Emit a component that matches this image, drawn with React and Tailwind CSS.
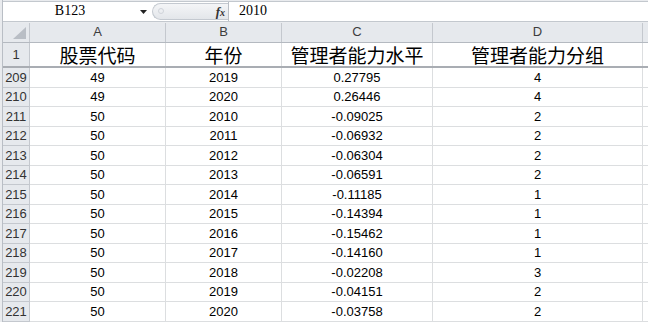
import React from "react";

const rows = [
	["209", "49", "2019", "0.27795", "4"],
	["210", "49", "2020", "0.26446", "4"],
	["211", "50", "2010", "-0.09025", "2"],
	["212", "50", "2011", "-0.06932", "2"],
	["213", "50", "2012", "-0.06304", "2"],
	["214", "50", "2013", "-0.06591", "2"],
	["215", "50", "2014", "-0.11185", "1"],
	["216", "50", "2015", "-0.14394", "1"],
	["217", "50", "2016", "-0.15462", "1"],
	["218", "50", "2017", "-0.14160", "1"],
	["219", "50", "2018", "-0.02208", "3"],
	["220", "50", "2019", "-0.04151", "2"],
	["221", "50", "2020", "-0.03758", "2"],
];

const sans = "font-['Liberation_Sans',Arial,sans-serif]";
const cjk = "font-['Noto_Sans_CJK_SC','Noto_Sans_CJK_JP',sans-serif]";

function FormulaBar() {
	return (
		<div className="flex h-[20px] border-b border-[#c3c8ce] bg-white">
			{/* name box */}
			<div className="relative flex w-[149px] items-center">
				<span className="w-[134px] text-center font-['Liberation_Serif',serif] text-[14px] leading-none text-black">
					B123
				</span>
				<svg className="absolute left-[137px] top-[8px]" width="8" height="5" viewBox="0 0 8 5">
					<polygon points="0,0 7,0 3.5,4" fill="#222" />
				</svg>
			</div>
			{/* fx pill */}
			<div className="my-[1px] flex w-[76px] items-center rounded-l-full border border-r-0 border-[#c4c9d0] bg-[linear-gradient(#f4f5f7,#e3e6ea)] pl-[5px]">
				<span className="h-[6px] w-[6px] rounded-full border border-[#d0d4da]" />
				<span className="ml-auto mr-[3px] font-['Liberation_Serif',serif] text-[13px] font-bold italic leading-none text-[#333]">
					f<span className="text-[10px]">x</span>
				</span>
			</div>
			{/* input */}
			<div className="flex flex-1 items-center border-l border-[#b9bec5] pl-[10px] font-['Liberation_Serif',serif] text-[14px] leading-none text-black">
				2010
			</div>
		</div>
	);
}

function HeaderRow() {
	const cols = [
		["A", "w-[136px]"],
		["B", "w-[116px]"],
		["C", "w-[151px]"],
		["D", "w-[210px]"],
	];
	return (
		<div className={`flex h-[20px] border-b border-[#b4b9c0] bg-[#e6e9ed] ${sans} text-[13px] text-[#3d3d3d]`}>
			<div className="relative w-[27px] shrink-0 border-r border-[#c4c8ce]">
				<svg className="absolute bottom-[3px] right-[3px]" width="13" height="12" viewBox="0 0 13 12">
					<polygon points="13,0 13,12 0,12" fill="#b9bec5" />
				</svg>
			</div>
			{cols.map(([name, w]) => (
				<div key={name} className={`${w} flex shrink-0 items-center justify-center border-r border-[#c4c8ce]`}>
					{name}
				</div>
			))}
			<div className="flex-1" />
		</div>
	);
}

function Row({ r, i }) {
	const h = i % 2 === 0 ? "h-[20px]" : "h-[19px]";
	const cell = "flex shrink-0 items-center justify-center border-r border-b border-[#dcdee0]";
	return (
		<div className={`flex ${h} ${sans} text-[13px] text-black`}>
			<div className="flex w-[27px] shrink-0 items-center justify-center border-r border-b border-[#c4c8ce] bg-[#e6e9ed] text-[13px] text-[#333]">
				{r[0]}
			</div>
			<div className={`${cell} w-[136px]`}>{r[1]}</div>
			<div className={`${cell} w-[116px]`}>{r[2]}</div>
			<div className={`${cell} w-[151px]`}>{r[3]}</div>
			<div className={`${cell} w-[210px]`}>{r[4]}</div>
			<div className="flex-1 border-b border-[#dcdee0]" />
		</div>
	);
}

export default function App() {
	return (
		<div className="flex h-[322px] w-[648px] overflow-hidden bg-[#eceef1]">
			<div className="w-[3px] shrink-0 border-r border-[#b9bec5] bg-[#e9ebee]" />
			<div className="flex min-w-0 flex-1 flex-col bg-white">
				<div className="h-[2px] border-b border-[#c3c8ce] bg-[#e9ebee]" />
				<FormulaBar />
				<div className="h-[1px] bg-[#e9ebee]" />
				<HeaderRow />
				{/* row 1 – frozen */}
				<div className={`flex h-[26px] border-b-2 border-[#a9adb3] ${cjk} text-[19px] leading-none text-black`}>
					<div className={`flex w-[27px] shrink-0 items-center justify-center border-r border-[#c4c8ce] bg-[#e6e9ed] ${sans} text-[13px] text-[#333]`}>
						1
					</div>
					<div className="flex w-[136px] shrink-0 items-center justify-center border-r border-[#dcdee0]">股票代码</div>
					<div className="flex w-[116px] shrink-0 items-center justify-center border-r border-[#dcdee0]">年份</div>
					<div className="flex w-[151px] shrink-0 items-center justify-center border-r border-[#dcdee0]">管理者能力水平</div>
					<div className="flex w-[210px] shrink-0 items-center justify-center border-r border-[#dcdee0]">管理者能力分组</div>
					<div className="flex-1" />
				</div>
				{rows.map((r, i) => (
					<Row key={r[0]} r={r} i={i} />
				))}
			</div>
		</div>
	);
}
